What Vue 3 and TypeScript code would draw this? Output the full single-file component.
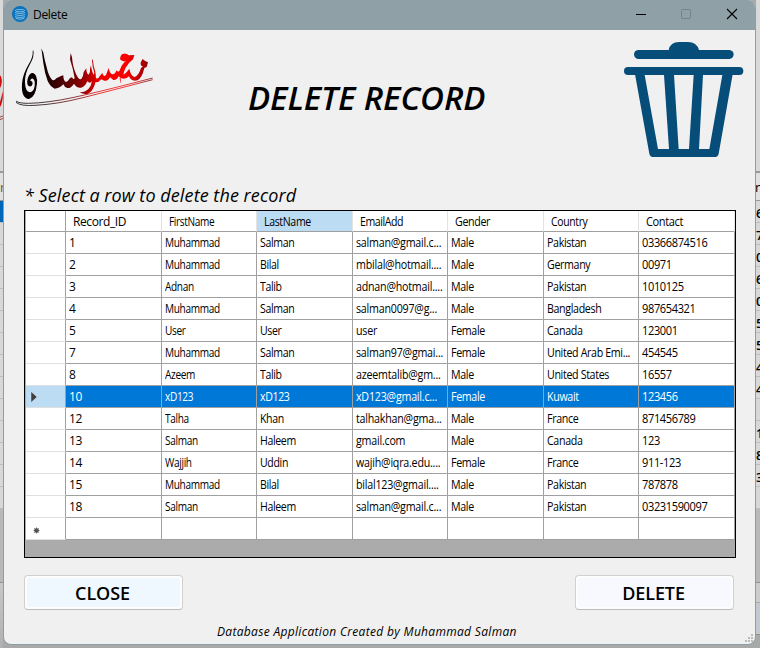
<script setup lang="ts">
interface PersonRecord {
  cells: string[]
  selected?: boolean
}

const columns: string[] = ['Record_ID', 'FirstName', 'LastName', 'EmailAdd', 'Gender', 'Country', 'Contact']
const sortedColumn = 'LastName'

const records: PersonRecord[] = [
  { cells: ['1', 'Muhammad', 'Salman', 'salman@gmail.c...', 'Male', 'Pakistan', '03366874516'] },
  { cells: ['2', 'Muhammad', 'Bilal', 'mbilal@hotmail....', 'Male', 'Germany', '00971'] },
  { cells: ['3', 'Adnan', 'Talib', 'adnan@hotmail....', 'Male', 'Pakistan', '1010125'] },
  { cells: ['4', 'Muhammad', 'Salman', 'salman0097@g...', 'Male', 'Bangladesh', '987654321'] },
  { cells: ['5', 'User', 'User', 'user', 'Female', 'Canada', '123001'] },
  { cells: ['7', 'Muhammad', 'Salman', 'salman97@gmai...', 'Female', 'United Arab Emi...', '454545'] },
  { cells: ['8', 'Azeem', 'Talib', 'azeemtalib@gm...', 'Male', 'United States', '16557'] },
  { cells: ['10', 'xD123', 'xD123', 'xD123@gmail.c...', 'Female', 'Kuwait', '123456'], selected: true },
  { cells: ['12', 'Talha', 'Khan', 'talhakhan@gma...', 'Male', 'France', '871456789'] },
  { cells: ['13', 'Salman', 'Haleem', 'gmail.com', 'Male', 'Canada', '123'] },
  { cells: ['14', 'Wajjih', 'Uddin', 'wajih@iqra.edu....', 'Female', 'France', '911-123'] },
  { cells: ['15', 'Muhammad', 'Bilal', 'bilal123@gmail....', 'Male', 'Pakistan', '787878'] },
  { cells: ['18', 'Salman', 'Haleem', 'salman@gmail.c...', 'Male', 'Pakistan', '03231590097'] },
]

const behindRight: string[] = ['6', '7', '0', '6', '0', '5', '5', '4', '4', '', '1', '8', '3', '']
</script>

<template>
  <div class="desktop">
    <div class="behind left">
      <div class="b-top">
        <svg class="b-mark" viewBox="0 0 3 50" width="3" height="50">
          <path d="M0 4Q3 8 1 15L0 17ZM3 20Q3 32 0 36V31L3 20Z" fill="#c90d10" />
          <path d="M0 46L3 45M0 48.500L3 47.500" stroke="#8f2020" stroke-width=".8" />
        </svg>
      </div>
      <div class="b-head"><span>r</span></div>
      <div v-for="n in 14" :key="n" class="b-row" :class="{ active: n === 1 }"></div>
      <div class="b-gray"></div>
      <div class="b-foot"></div>
    </div>

    <main class="window">
      <header class="titlebar">
        <svg class="app-icon" viewBox="0 0 48 48" width="16" height="16">
          <circle cx="24" cy="24" r="24" fill="#0a73bd" />
          <g fill="none" stroke="#9accea" stroke-width="2.400">
            <ellipse cx="24" cy="14" rx="14" ry="3.500" />
            <path d="M9 20q15 6 30 0M9 26q15 6 30 0M9 32q15 6 30 0M11 37q13 6 26 0" />
          </g>
        </svg>
        <span class="caption">Delete</span>
        <svg class="controls" viewBox="0 0 110 30" width="110" height="30" fill="none">
          <path d="M3 14.500h10" stroke="#000" />
          <rect x="48.500" y="9.500" width="9" height="9" rx="1" stroke="#708389" />
          <path d="M94 9l10 10M104 9l-10 10" stroke="#000" stroke-width="1.100" />
        </svg>
      </header>

      <section class="banner">
        <svg class="signature" viewBox="45 141 420 180" width="140" height="60">
          <defs>
            <linearGradient id="ink" gradientUnits="userSpaceOnUse" x1="50" y1="0" x2="458" y2="0">
              <stop offset="0" stop-color="#000" />
              <stop offset=".2" stop-color="#150002" />
              <stop offset=".45" stop-color="#7c0004" />
              <stop offset=".6" stop-color="#e80000" />
              <stop offset=".8" stop-color="#ff0000" />
              <stop offset="1" stop-color="#7a0006" />
            </linearGradient>
          </defs>
          <g fill="url(#ink)">
            <path d="M100 151Q104 170 90 193Q74 221 75 247Q76 276 90 277Q101 275 104 258Q106 240 99 236Q92 234 91 243Q98 241 98 251Q94 263 86 258Q79 252 83 236Q88 218 99 219Q113 224 111 251Q107 291 87 297Q63 294 66 251Q68 223 86 193Q100 171 98 153Z" />
            <path d="M124 145L130 158Q134 181 140 202Q146 230 157 240Q163 243 169 235L183 228L190 226Q190 243 198 246Q205 243 210 234L216 232Q220 240 224 235Q219 205 210 178L212 159L216 171Q218 200 228 222Q237 242 244 237Q250 230 251 216L259 205Q259 220 265 224Q271 219 270 206L273 196Q275 215 281 224L283 219Q277 198 276 182L278 176Q280 198 286 215Q290 237 285 252Q278 275 264 281Q251 284 239 277Q262 276 272 257L276 243Q271 253 262 244Q254 262 243 263Q230 265 222 251Q212 266 202 264Q194 263 190 253Q177 266 164 266Q150 259 143 243Q134 219 130 190Z" />
            <path d="M285 232Q293 241 300 227L307 219Q310 233 318 225L326 204Q330 223 338 223Q345 223 350 211Q356 222 361 206Q368 189 378 184Q366 186 360 178Q361 161 372 161Q380 160 386 166L403 165L399 178Q386 188 377 203Q370 217 371 224Q380 218 388 206Q392 227 403 231Q415 229 423 204L429 199Q419 197 423 185L428 177Q435 184 444 187L440 201L433 204Q426 235 412 241Q394 246 387 229Q377 239 365 235L356 229Q351 241 340 240L330 232Q323 245 313 242L304 238Q294 250 282 246Z" />
            <path d="M360 224Q357 241 364 252Q361 245 362 231Z" />
          </g>
          <g fill="none" stroke="url(#ink)" stroke-width="2.300">
            <path d="M48 303Q56 310 85 310Q143 309 222 292T458 234" />
            <path d="M48 307Q62 319 105 316Q170 313 249 293T458 239" />
          </g>
        </svg>
        <h1>DELETE RECORD</h1>
        <svg class="bin" viewBox="72 123 360 351" width="120" height="117" fill="#074d79">
          <path d="M114 150H206Q211 126 237 126H264Q290 126 297 150H388Q400 151 401 163Q400 176 388 177H114Q103 176 102 163Q103 151 114 150Z" />
          <rect x="72" y="201" width="358" height="24" rx="12" />
          <path fill-rule="evenodd" d="M105 223H398L356 461Q354 471 343 471H161Q150 471 148 461ZM134 225L174 447H207L192 225ZM222 225L236 447H267L281 225ZM309 225L297 447H328L367 225Z" />
        </svg>
      </section>

      <p class="hint">* Select a row to delete the record</p>

      <div class="grid">
        <div class="row head">
          <div class="stub"></div>
          <div v-for="c in columns" :key="c" class="cell" :class="[c, { sorted: c === sortedColumn }]"><span>{{ c }}</span></div>
        </div>
        <div v-for="r in records" :key="r.cells[0]" class="row" :class="{ selected: r.selected }">
          <div class="stub">
            <svg v-if="r.selected" viewBox="0 0 8 12" width="8" height="12">
              <path d="M1 .5L7 6L1 11.500Z" fill="#404040" stroke="#fff" stroke-opacity=".5" stroke-width=".7" />
            </svg>
          </div>
          <div v-for="(v, i) in r.cells" :key="i" class="cell" :class="columns[i]"><span>{{ v }}</span></div>
        </div>
        <div class="row">
          <div class="stub blank">
            <svg viewBox="0 0 7 7" width="7" height="7">
              <circle cx="3.500" cy="3.500" r="2.300" fill="#444" />
              <path d="M3.500 .5v6M.5 3.500h6M1.300 1.300l4.400 4.400M5.700 1.300L1.300 5.700" stroke="#555" stroke-width=".8" />
            </svg>
          </div>
          <div v-for="c in columns" :key="c" class="cell"></div>
        </div>
      </div>

      <div class="actions">
        <button class="close" type="button"><span>CLOSE</span></button>
        <button class="delete" type="button"><span>DELETE</span></button>
      </div>
      <footer>Database Application Created by Muhammad Salman</footer>
      <svg class="grip" viewBox="0 0 8 8" width="8" height="8" fill="#bababa">
        <path d="M6 0h2v2h-2zM3 3h2v2h-2zM6 3h2v2h-2zM0 6h2v2h-2zM3 6h2v2h-2zM6 6h2v2h-2z" />
      </svg>
    </main>

    <div class="behind right">
      <div class="b-top"></div>
      <div class="b-head"><span>n</span></div>
      <div v-for="(d, i) in behindRight" :key="i" class="b-row"><span>{{ d }}</span></div>
      <div class="b-gray"></div>
      <div class="b-foot"></div>
      <div class="b-button"></div>
    </div>
  </div>
</template>

<style>
body { margin: 0; overflow: hidden; }
</style>

<style scoped>
* { box-sizing: border-box; }
.desktop {
  width: 760px; height: 648px; display: grid; grid-template-columns: 3px 753px 4px;
  background: #a9a9a9; font-family: "Open Sans", "Noto Sans", sans-serif; color: #000; overflow: hidden;
}
.behind { overflow: hidden; height: 648px; font-size: 13px; }
.b-top { height: 173px; background: #d9d9d9; border-bottom: 2px solid #999; padding-top: 71px; }
.b-mark { display: block; }
.b-head { height: 28px; background: #e0e0e0; border-bottom: 1px solid #999; line-height: 29px; }
.b-row { height: 22px; background: #d8d8d8; border-bottom: 1px solid #bebebe; line-height: 25px; font-weight: 600; }
.b-row.active { background: #0067b8; }
.b-row span { display: block; }
.b-head span { display: block; margin-left: -1px; }
.left .b-head span { color: #805020; margin-left: 0; }
.b-gray { height: 74px; background: #b9b9b9; border-bottom: 1px solid #929292; }
.b-foot { height: 20px; background: #ccc; border-bottom: 1px solid #aaa; }
.left .b-foot { height: 66px; border: 0; background: linear-gradient(#c8c8c8, #b0b0b0); }
.b-button { height: 32px; background: #c2c9d0; border-bottom: 1px solid #909090; }
.window {
  position: relative; height: 645px; background: #f0f0f0; border: 1px solid #8aa0a7; border-top: 0;
  border-radius: 8px; overflow: hidden;
}
.titlebar { height: 30px; background: #8fa1a7; display: flex; align-items: center; padding-left: 8px; }
.app-icon { margin-top: -2px; }
.caption { font-size: 12px; margin: -1px 0 0 5px; letter-spacing: -.3px; }
.controls { margin-left: auto; margin-right: 12px; }
.banner { height: 147px; display: flex; align-items: flex-start; }
.signature { margin: 17px 0 0 11px; flex: none; }
h1 {
  margin: 45px 0 0 93px; font-size: 33px; line-height: 46px; font-weight: 600; font-style: italic;
  white-space: nowrap; width: 376px; flex: none; letter-spacing: -.13px;
}
.bin { margin-top: 11px; flex: none; }
.hint {
  margin: 4px 0 0 20px; height: 29px; line-height: 29px; font-size: 18px; font-style: italic;
  white-space: nowrap; letter-spacing: .16px; word-spacing: -.4px;
}
.grid {
  margin-left: 20px; width: 712px; height: 348px; border: 1px solid #000; background: #ababab;
  font-size: 12px; padding-left: 1px;
}
.row { display: grid; grid-template-columns: 40px 96px 95px 96px 95px 96px 95px 96px; height: 22px; }
.row.head { height: 21px; }
.stub { background: #fff; border-right: 1px solid #a0a0a0; border-bottom: 1px solid #e0e0e0; display: flex; align-items: center; padding-left: 4px; }
.stub.blank { padding: 4px 0 0 7px; }
.cell {
  background: #fff; border-right: 1px solid #a0a0a0; border-bottom: 1px solid #a0a0a0;
  line-height: 22px; padding-left: 3px; white-space: nowrap; overflow: hidden; letter-spacing: -.4px;
}
.cell span { display: inline-block; transform-origin: 0 50%; transform: scaleX(.89); }
.cell.Record_ID span { transform: none; }
.cell.FirstName span { transform: scaleX(.84); }
.cell.LastName span { transform: scaleX(.88); }
.cell.EmailAdd { letter-spacing: -.25px; }
.cell.EmailAdd span { margin-right: -12px; }
.cell.Contact span { transform: scaleX(.92); }
.head .cell { padding-left: 7px; border-right-color: #e3e3e3; line-height: 22px; }
.head .cell.EmailAdd { letter-spacing: -.5px; }
.head .cell.EmailAdd span { transform: scaleX(.88); }
.head .cell.Country span { transform: scaleX(.87); }
.head .stub { border-bottom-color: #a0a0a0; }
.cell.sorted { background: #bcdcf4; }
.selected .cell { background: #0078d7; color: #fff; }
.selected .stub { background: #bcdcf4; }
.actions { display: flex; justify-content: space-between; padding: 17px 21px 0 20px; }
button {
  width: 159px; height: 35px; border: 1px solid #d0d0d0; border-bottom-color: #bcbcbc; border-radius: 4px;
  padding: 1px 2px 0 0; color: #000; font: 600 18px/33px "Open Sans", sans-serif; letter-spacing: -.1px;
  box-shadow: inset 0 0 0 2px #fdfdfd;
}
.close { background: #f0f8ff; }
.delete { background: #f8f8ff; }
footer { margin: 13px 0 0 213px; font-size: 12px; line-height: 18px; font-style: italic; white-space: nowrap; letter-spacing: .32px; }
.grip { position: absolute; right: 2px; bottom: 2px; }
</style>
